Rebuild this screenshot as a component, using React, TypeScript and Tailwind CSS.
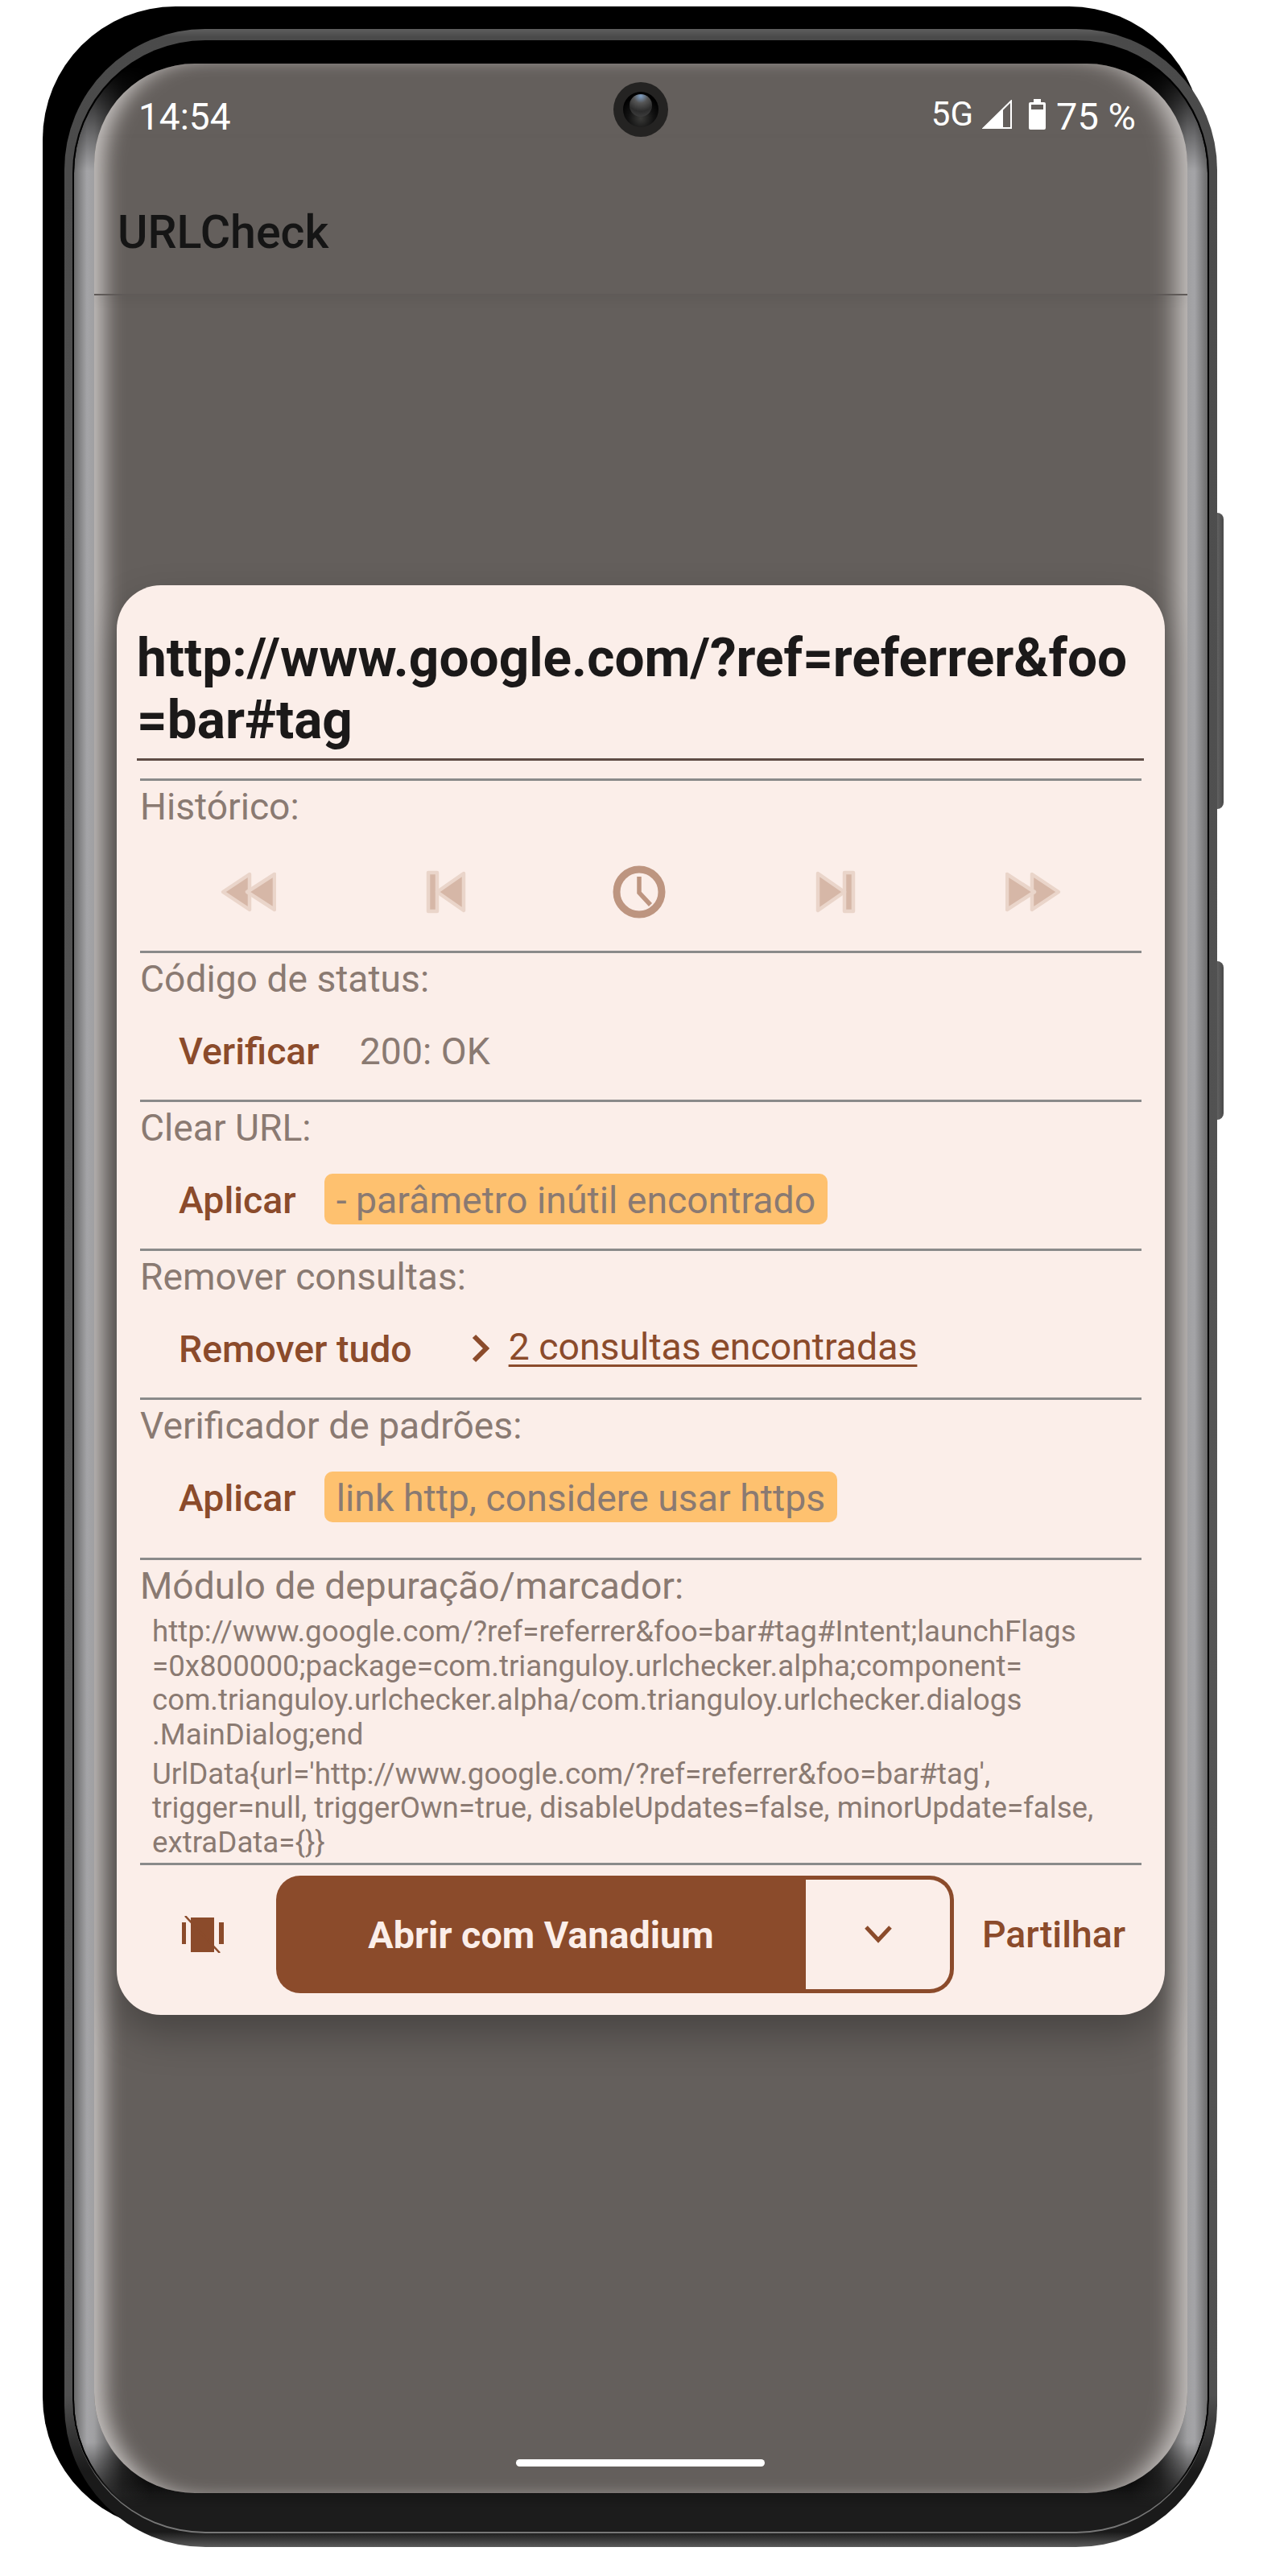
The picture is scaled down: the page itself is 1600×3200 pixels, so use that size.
import type { ReactNode } from 'react';

const Divider = () => <div className="h-[3px] bg-[#8a8a8a]" />;

const Label = ({ children }: { children: ReactNode }) => (
  <div className="h-[52px] text-[46.2px] leading-[52px] text-[#8a7a72] whitespace-nowrap">{children}</div>
);

const ActionText = ({ children }: { children: ReactNode }) => (
  <span className="pt-[4px] text-[46.4px] leading-[63px] font-medium text-[#8b4b2b] whitespace-nowrap">{children}</span>
);

const Badge = ({ children }: { children: ReactNode }) => (
  <span className="h-[63px] px-[15px] rounded-[10px] bg-[#fec16f] text-[46.4px] leading-[67px] text-[#8a7a72] whitespace-nowrap">
    {children}
  </span>
);

const Section = ({ label, pad, children }: { label: string; pad: string; children: ReactNode }) => (
  <section className={`pt-[6px] ${pad}`}>
    <Label>{label}</Label>
    <div className="mt-[31px] pl-[48px] flex items-center gap-[35px] h-[63px]">{children}</div>
  </section>
);

// history arrows, pale and disabled in the picture
const HistoryIcon = ({ kind }: { kind: 'first' | 'prev' | 'next' | 'last' }) => {
  const flip = kind === 'next' || kind === 'last' ? 'scale-x-[-1]' : '';
  const double = kind === 'first' || kind === 'last';
  return (
    <svg viewBox="0 0 70 54" className={`w-[70px] h-[54px] ${flip}`}>
      <g fill="#d6b7a7" stroke="#ead5ca" strokeWidth="4.5" strokeLinejoin="round">
        {double ? (
          <>
            <path d="M37 5 L4 27 L37 49 Z" />
            <path d="M68 5 L34 27 L68 49 Z" />
          </>
        ) : (
          <>
            <path d="M15 3 H26 V51 H15 Z" />
            <path d="M59 4 L26 27 L59 50 Z" />
          </>
        )}
      </g>
    </svg>
  );
};

const Clock = () => (
  <svg viewBox="0 0 66 66" className="w-[66px] h-[66px] -translate-x-[2px]">
    <circle cx="33" cy="33" r="28" fill="none" stroke="#bd9580" strokeWidth="9" />
    <path d="M33 14 V34 L47 49" fill="none" stroke="#bd9580" strokeWidth="5.5" />
  </svg>
);

const BackgroundIcon = () => (
  <svg viewBox="0 0 52 46" className="w-[52px] h-[46px]">
    <rect x="11" y="2" width="29" height="43" fill="#8b4b2b" />
    <rect x="0" y="8" width="5" height="27" fill="#8b4b2b" />
    <rect x="46" y="8" width="6" height="27" fill="#8b4b2b" />
    <path d="M4 0 L47 46" stroke="#8b4b2b" strokeWidth="2.5" />
  </svg>
);

const Camera = () => (
  <div className="absolute left-[645px] top-[23px] w-[68px] h-[68px] rounded-full bg-[#242322] flex items-center justify-center">
    <div className="w-[44px] h-[44px] rounded-full bg-[radial-gradient(circle_at_50%_75%,#3a3a38_0,#111_40%,#000_70%)] flex items-start justify-center">
      <div className="mt-[3px] w-[28px] h-[28px] rounded-full bg-[radial-gradient(circle_at_50%_8%,#7f9fc4_0,#555_30%,#2c2c2c_65%,#444_100%)]" />
    </div>
  </div>
);

const StatusIcons = () => (
  <div className="flex items-center text-white">
    <span className="text-[42px] leading-[52px] mr-[11px] mt-[-6px]">5G</span>
    <svg viewBox="0 0 37 36" className="w-[37px] h-[36px] mr-[21px] mt-[-6px]">
      <path d="M36 1.5 V35 H2 Z" fill="none" stroke="#fff" strokeWidth="2" />
      <path d="M26 12 V36 H0 Z" fill="#fff" />
    </svg>
    <svg viewBox="0 0 21 38" className="w-[21px] h-[38px] mr-[13px] mt-[-6px]">
      <path d="M6 0 H15 V4 H19 Q21 4 21 6 V36 Q21 38 19 38 H2 Q0 38 0 36 V6 Q0 4 2 4 H6 Z" fill="#fff" />
      <rect x="3" y="7" width="15" height="6" fill="#645f5c" />
    </svg>
    <span className="text-[47px] leading-[52px]">75 %</span>
  </div>
);

export default function App() {
  return (
    <div className="relative w-[1600px] h-[3200px] bg-white overflow-hidden font-['Roboto',sans-serif]">
      {/* back of the phone, peeks out to the upper left */}
      <div className="absolute left-[53px] top-[8px] w-[1440px] h-[3135px] rounded-[165px] bg-black" />
      <div className="absolute left-[1510px] top-[637px] w-[10px] h-[368px] rounded-r-[8px] bg-[linear-gradient(90deg,#666,#4a4a4a)]" />
      <div className="absolute left-[1510px] top-[1194px] w-[10px] h-[197px] rounded-r-[8px] bg-[linear-gradient(90deg,#666,#4a4a4a)]" />

      <div className="ml-[80px] pt-[36px]">
        <div className="relative w-[1432px] h-[3128px] rounded-[175px] px-[37px] pt-[43px] pb-[67px] bg-[linear-gradient(180deg,#5e5e5e_0,#4a4a4a_10px,#555_60%,#505050_94%,#1a1a1a_97%,#1a1a1a_99.4%,#5a5a5a_100%)]">
          <div className="absolute inset-x-[10px] top-[14px] bottom-[17px] rounded-[165px] border-b-2 border-[#777] bg-[linear-gradient(180deg,#000_97%,#1c1c1c_98.5%)]" />
          <div className="absolute inset-x-[12px] top-[16px] bottom-[20px] rounded-[163px] bg-[linear-gradient(90deg,#6a6a6a_0,#a4a4a7_16px,#a0a0a2_25px,#333_60px,#000_95px,#000_calc(100%-95px),#333_calc(100%-60px),#a0a0a2_calc(100%-25px),#a4a4a7_calc(100%-16px),#6a6a6a_100%)] [mask-image:linear-gradient(180deg,transparent_30px,#000_160px,#000_calc(100%-110px),transparent_calc(100%-30px))]" />

          <div className="relative h-full rounded-[125px] overflow-hidden bg-[#645f5c] shadow-[inset_26px_0_26px_-14px_#c8c4c2,inset_-30px_0_30px_-16px_#c8c4c2]">
            <Camera />
            <div className="flex justify-between items-end pt-[40px] pl-[55px] pr-[64px] text-white">
              <span className="text-[46px] leading-[52px]">14:54</span>
              <StatusIcons />
            </div>

            <header className="h-[196px] pt-[86px] pl-[29px] border-b-2 border-[#5f5a58] shadow-[0_6px_14px_rgba(0,0,0,0.05)]">
              <h1 className="text-[57.3px] leading-[64px] font-medium text-[#151515]">URLCheck</h1>
            </header>

            <div className="mt-[360px] mx-[28px] h-[1776px] rounded-[55px] bg-[#fbeee9] shadow-[0_24px_50px_rgba(0,0,0,0.28)] pt-[52px] px-[29px] text-[#8a7a72]">
              <div className="-ml-[4px] -mr-[3px]">
                <div className="text-[65.75px] leading-[77px] font-bold text-[#1b1919] whitespace-nowrap">
                  <div>http://www.google.com/?ref=referrer&amp;foo</div>
                  <div>=bar#tag</div>
                </div>
                <div className="mt-[9px] h-[3px] bg-[#5e4c45]" />
              </div>
              <div className="mt-[22px]">
                <Divider />

                <section className="pt-[6px] pb-[46px]">
                  <Label>Histórico:</Label>
                  <div className="mt-[47px] px-[12px] grid grid-cols-5 h-[60px] items-center justify-items-center">
                    <HistoryIcon kind="first" />
                    <HistoryIcon kind="prev" />
                    <Clock />
                    <HistoryIcon kind="next" />
                    <HistoryIcon kind="last" />
                  </div>
                </section>
                <Divider />

                <Section label="Código de status:" pad="pb-[30px]">
                  <ActionText>Verificar</ActionText>
                  <span className="pt-[4px] pl-[15px] text-[46.4px] leading-[63px]">200: OK</span>
                </Section>
                <Divider />

                <Section label="Clear URL:" pad="pb-[30px]">
                  <ActionText>Aplicar</ActionText>
                  <Badge>- parâmetro inútil encontrado</Badge>
                </Section>
                <Divider />

                <Section label="Remover consultas:" pad="pb-[30px]">
                  <ActionText>Remover tudo</ActionText>
                  <span className="flex items-center gap-[24px] ml-[39px]">
                    <svg viewBox="0 0 22 36" className="w-[22px] h-[36px]">
                      <path d="M3 3 L18 18 L3 33" fill="none" stroke="#8b4b2b" strokeWidth="6" />
                    </svg>
                    <span className="text-[46.4px] leading-[63px] text-[#8b4b2b] underline underline-offset-[6px] decoration-[3px] mt-[-2px]">
                      2 consultas encontradas
                    </span>
                  </span>
                </Section>
                <Divider />

                <Section label="Verificador de padrões:" pad="pb-[44px]">
                  <ActionText>Aplicar</ActionText>
                  <Badge>link http, considere usar https</Badge>
                </Section>
                <Divider />

                <section className="pt-[6px] pb-[3px]">
                  <Label>Módulo de depuração/marcador:</Label>
                  <div className="mt-[10px] pl-[15px] text-[36.7px] leading-[42.67px] whitespace-nowrap">
                    <div>http://www.google.com/?ref=referrer&amp;foo=bar#tag#Intent;launchFlags</div>
                    <div>=0x800000;package=com.trianguloy.urlchecker.alpha;component=</div>
                    <div>com.trianguloy.urlchecker.alpha/com.trianguloy.urlchecker.dialogs</div>
                    <div>.MainDialog;end</div>
                    <div className="mt-[6px]">UrlData{'{'}url='http://www.google.com/?ref=referrer&amp;foo=bar#tag',</div>
                    <div>trigger=null, triggerOwn=true, disableUpdates=false, minorUpdate=false,</div>
                    <div>extraData={'{}}'}</div>
                  </div>
                </section>
                <Divider />

                <div className="mt-[13px] flex items-center h-[146px]">
                  <div className="w-[169px] pl-[52px] flex items-center">
                    <BackgroundIcon />
                  </div>
                  <div className="flex w-[842px] h-[146px] rounded-[30px] bg-[#8b4b2b]">
                    <button className="w-[658px] pt-[2px] text-[#fbeee9] text-[46.7px] font-bold">Abrir com Vanadium</button>
                    <button className="flex-1 my-[5px] mr-[5px] rounded-r-[25px] bg-[#fbeee9] flex items-center justify-center">
                      <svg viewBox="0 0 34 24" className="w-[34px] h-[24px]">
                        <path d="M2 3 L17 19 L32 3" fill="none" stroke="#8b4b2b" strokeWidth="5" />
                      </svg>
                    </button>
                  </div>
                  <span className="ml-[35px] pt-[2px] text-[46.4px] font-medium text-[#8b4b2b]">Partilhar</span>
                </div>
              </div>
            </div>

            {/* gesture bar */}
            <div className="absolute left-[524px] bottom-[33px] w-[309px] h-[9px] rounded-full bg-white" />
          </div>
        </div>
      </div>
    </div>
  );
}
